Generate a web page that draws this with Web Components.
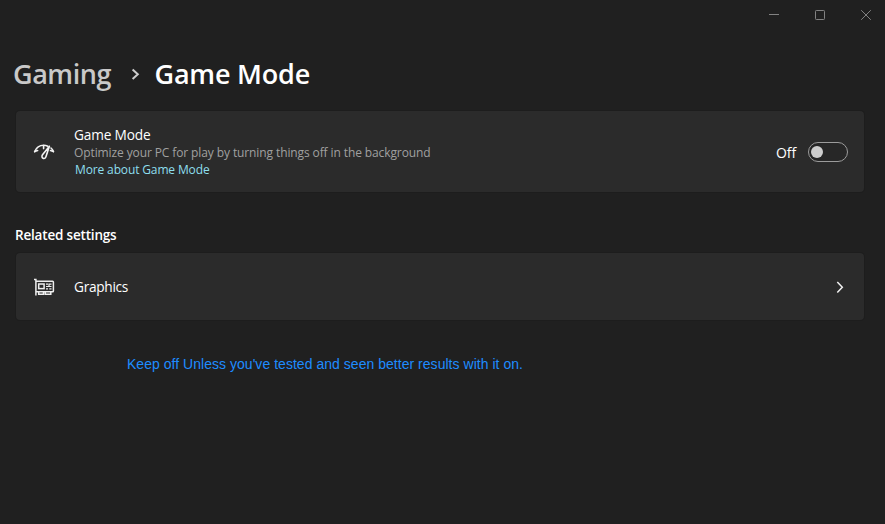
<!DOCTYPE html>
<html lang="en">
<head>
<meta charset="utf-8">
<title>Game Mode</title>
<style>
html,body{margin:0;height:100%;background:#202020;overflow:hidden}
</style>
</head>
<body>
<settings-window></settings-window>
<script>
const define = (name, markup, setup) => customElements.define(name, class extends HTMLElement {
  constructor() {
    super();
    this.attachShadow({mode: 'open'}).innerHTML = markup;
  }
  connectedCallback() { if (setup) setup(this); }
});

/* A single line of text whose tracking is set so that it spans the width given in "span". */
define('ui-text', `<style>
:host{display:block;white-space:nowrap}
span{display:inline-block}
</style><span><slot></slot></span>`, el => {
  const span = Number(el.getAttribute('span'));
  const box = el.shadowRoot.querySelector('span');
  const count = el.textContent.length;
  const natural = box.getBoundingClientRect().width;
  if (span && natural) box.style.letterSpacing = ((span - natural) / count) + 'px';
});

define('caption-buttons', `<style>
:host{display:flex;justify-content:flex-end;height:30px;box-sizing:border-box}
svg{width:46px;height:30px;flex:none;fill:none;stroke:#828282;stroke-width:1}
svg:last-child{margin-right:-4px}
</style>
<svg viewBox="0 0 46 30"><path d="M18 14.5h10"/></svg>
<svg viewBox="0 0 46 30"><rect x="18.5" y="10.5" width="9" height="9" rx=".8"/></svg>
<svg viewBox="0 0 46 30"><path d="M18.2 10.2l9.6 9.6M27.8 10.2l-9.6 9.6"/></svg>`);

define('bread-crumb', `<style>
:host{display:flex;height:38px;line-height:38px;font-size:27px;font-weight:600;color:#fff}
.parent{color:#c9c9c9;width:117.5px}
svg{width:10px;height:38px;margin-right:14px;fill:none;stroke:#cdcdcd;stroke-width:2}
</style>
<ui-text class="parent" span="98">Gaming</ui-text>
<svg viewBox="0 0 10 38"><path d="M1.6 14.4L6.8 19.2L1.6 24"/></svg>
<ui-text span="155.5">Game Mode</ui-text>`);

define('settings-card', `<style>
:host{display:flex;align-items:center;box-sizing:border-box;background:#2b2b2b;border-radius:4px;box-shadow:0 0 0 1px #1d1d1d;padding:0 16px 0 16px;color:#fff}
.icon{width:24px;height:24px;margin-right:18px;flex:none}
.body{flex:1}
</style>
<div class="icon"><slot name="icon"></slot></div>
<div class="body"><slot></slot></div>
<slot name="action"></slot>`);

define('game-mode-icon', `<style>:host{display:block}svg{display:block;fill:none;stroke:#f2f2f2;stroke-width:1.6;stroke-linecap:round;stroke-linejoin:round}</style>
<svg width="24" height="24" viewBox="0 0 24 24">
<path d="M2.7 11.6C4.5 7.2 8 5.3 11.7 5.3C13.2 5.3 14.5 5.6 15.8 6.2M19 8C20.1 9 20.9 10.2 21.4 11.6"/>
<path d="M2.7 11.6L5.6 10.5M21.4 11.6L18.5 10.6M11.6 5.6V8.6"/>
<path d="M17.4 6.2L10.5 14.8C9.5 16.3 9.9 18 11.4 18.4C12.8 18.7 13.7 17.8 14 16.6Z"/>
</svg>`);

define('graphics-icon', `<style>:host{display:block}svg{display:block;fill:none;stroke:#eee;stroke-width:1.5}</style>
<svg width="24" height="24" viewBox="0 0 24 24">
<path d="M2 4.5H3.9V20.5"/>
<path d="M4 6.3H20.6Q21.4 6.3 21.4 7.1V15.9Q21.4 16.7 20.6 16.7H4"/>
<rect x="6.7" y="9" width="5.4" height="4.6"/>
<path d="M14 9.2h2M17.3 9.2h2.2M14 11.5h5.5M14 13.8h2M17.3 13.8h2.2M17 8.5v3" stroke-width="1.2"/>
<path d="M6.7 16.7V19.2H11.5V16.7M13.3 16.7V19.2H18.8V16.7"/>
</svg>`);

define('toggle-switch', `<style>
:host{display:flex;align-items:center;height:20px;line-height:20px;font-size:14px;padding-top:1px}
ui-text{width:32px;padding-top:1px}
.track{box-sizing:border-box;width:40px;height:20px;border:1px solid #9c9c9c;border-radius:10px;background:#272727;display:flex;align-items:center;padding-left:2px}
.knob{width:12px;height:12px;border-radius:50%;background:#cecece}
</style>
<ui-text span="20">Off</ui-text><div class="track"><div class="knob"></div></div>`);

define('chevron-right', `<style>:host{display:block}svg{display:block;fill:none;stroke:#f0f0f0;stroke-width:1.5}</style>
<svg width="16" height="16" viewBox="0 0 16 16"><path d="M5.3 3.1L10.3 8.3L5.3 13.5"/></svg>`);

define('settings-window', `<style>
:host{display:block;height:524px;box-sizing:border-box;background:#202020;font-family:"Open Sans","Noto Sans",sans-serif;color:#fff}
main{padding:25px 21px 0 16px}
bread-crumb{margin-left:-3px}
.mode{height:81px;margin-top:18px}
.title{font-size:13.7px;line-height:19px}
.detail{font-size:12px;line-height:17px;color:#a0a0a0;font-weight:500}
.mode .detail{margin-top:.5px}
.link{font-size:12px;line-height:17px;color:#8edfee;padding-left:1px;font-weight:500}
.heading{font-size:13.5px;line-height:20px;font-weight:600;margin:33px 0 8px -1px}
.graphics{height:67px}
.note{font-family:"Liberation Sans",Arial,sans-serif;font-size:14px;line-height:20px;color:#1e8cff;margin:34px 0 0 111px}
</style>
<caption-buttons></caption-buttons>
<main>
<bread-crumb></bread-crumb>
<settings-card class="mode">
<game-mode-icon slot="icon"></game-mode-icon>
<ui-text class="title" span="76.5">Game Mode</ui-text>
<ui-text class="detail" span="356.5">Optimize your PC for play by turning things off in the background</ui-text>
<ui-text class="link" span="134.5">More about Game Mode</ui-text>
<toggle-switch slot="action"></toggle-switch>
</settings-card>
<ui-text class="heading" span="101.5">Related settings</ui-text>
<settings-card class="graphics">
<graphics-icon slot="icon"></graphics-icon>
<ui-text class="title" span="54">Graphics</ui-text>
<chevron-right slot="action"></chevron-right>
</settings-card>
<ui-text class="note" span="396">Keep off Unless you've tested and seen better results with it on.</ui-text>
</main>`);
</script>
</body>
</html>
